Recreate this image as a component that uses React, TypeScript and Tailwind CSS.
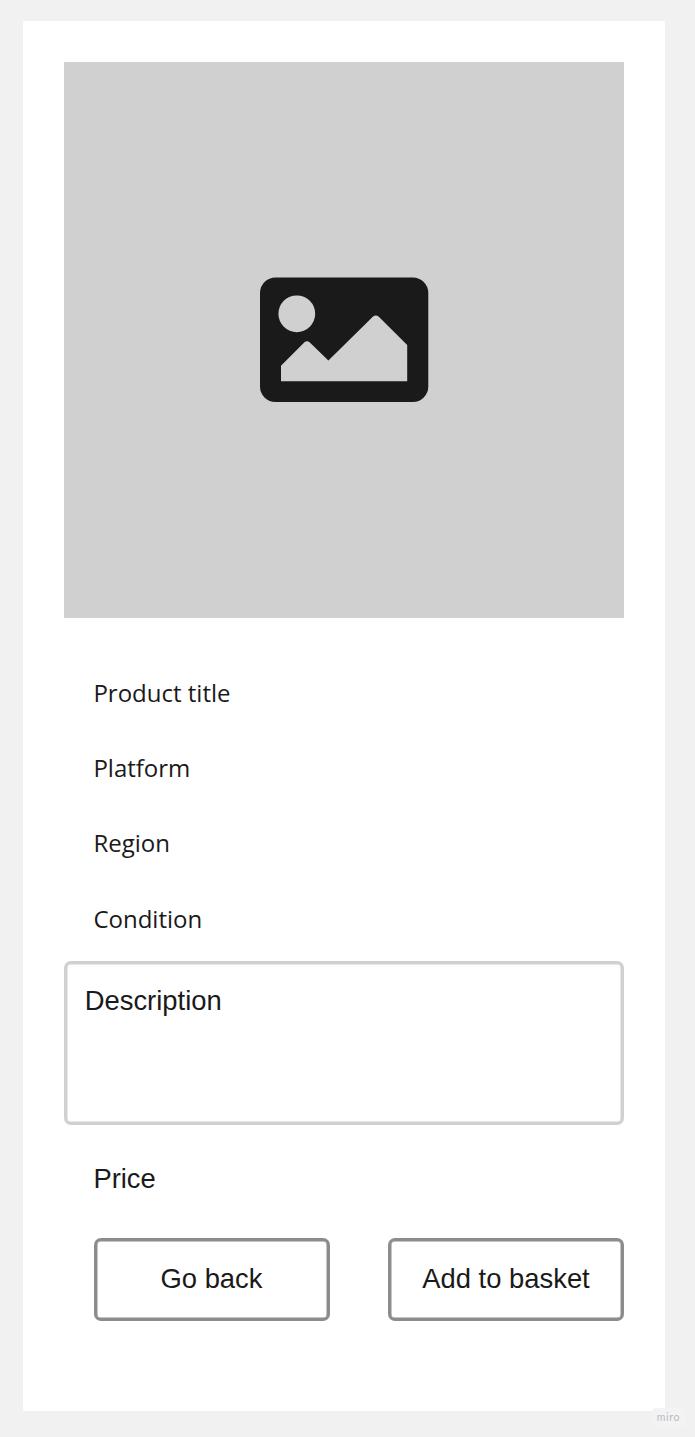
const details = ["Product title", "Platform", "Region", "Condition"];

function PictureIcon() {
  return (
    <svg width="170" height="126" viewBox="0 0 170 126" aria-hidden="true">
      <rect x="1" y="0.5" width="168.3" height="124.5" rx="15.5" fill="#1a1a1a" />
      <circle cx="37.8" cy="36.8" r="18.4" fill="#d0d0d0" />
      <path
        d="M22 104.2V88.8L45.2 65.6Q48 62.9 50.8 65.6L69.4 83.6L113.8 39.8Q116.8 37 119.8 39.8L148.2 67.9V104.2Z"
        fill="#d0d0d0"
      />
    </svg>
  );
}

export default function App() {
  return (
    <div className="relative h-[1437px] w-[695px] overflow-hidden bg-[#f1f1f1] pt-[21px] pl-[23px] font-['Liberation_Sans',sans-serif] text-[27.4px] text-[#1a1a1a]">
      <main className="flex h-[1390px] w-[642px] flex-col bg-white px-[41px] pt-[41px]">
        <div className="flex h-[556px] w-[560px] shrink-0 items-center justify-center bg-[#d0d0d0]">
          <PictureIcon />
        </div>

        <div className="mt-[37px] flex h-[302px] shrink-0 flex-col pl-[29.4px] font-['Open_Sans',sans-serif] text-[24px]">
          {details.map((detail) => (
            <p key={detail} className="h-[75px] leading-[75px] last:pt-px">
              {detail}
            </p>
          ))}
        </div>

        <section className="mt-[4px] h-[164px] w-[560px] shrink-0 rounded-[7px] border-[3px] border-[#d0d0d0] pt-[19px] pl-[17.7px] leading-[36px] shadow-[inset_0_0_0_0.5px_#d0d0d0]">
          Description
        </section>

        <p className="mt-[36px] h-[36px] shrink-0 pl-[29.4px] leading-[36px]">Price</p>

        <div className="mt-[41px] flex justify-between pl-[30px]">
          <button className="h-[83px] w-[236px] rounded-[7px] border-[3px] border-[#8c8c8c] pr-px pb-px shadow-[inset_0_0_0_0.5px_#8c8c8c]">
            Go back
          </button>
          <button className="h-[83px] w-[236px] rounded-[7px] border-[3px] border-[#8c8c8c] pb-px shadow-[inset_0_0_0_0.5px_#8c8c8c]">
            Add to basket
          </button>
        </div>
      </main>

      <span className="absolute right-[10px] bottom-[10px] flex h-[19px] w-[33px] items-center justify-center rounded-sm bg-[#f3f3f3] font-[Lato,sans-serif] text-[10.5px] tracking-[0.7px] text-[#b9b9c4]">
        miro
      </span>
    </div>
  );
}
